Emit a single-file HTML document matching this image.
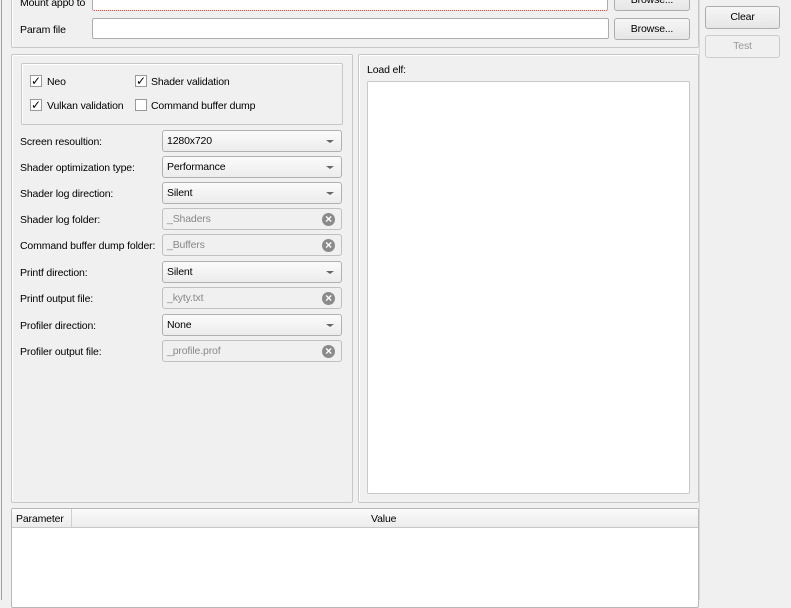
<!DOCTYPE html>
<html><head><style>
body{margin:0;width:791px;height:600px;background:#f0f0f0;font-family:"Liberation Sans",sans-serif;font-size:10.5px;letter-spacing:-0.15px;color:#000;position:relative;overflow:hidden}
.a{position:absolute}
.grp{position:absolute;border:1px solid #c8c8c8;border-radius:2px;box-shadow:inset 1px 1px 0 #fff}
.inp{position:absolute;background:#fff;border:1px solid #adadad;border-radius:2px;box-sizing:border-box}
.btn{position:absolute;box-sizing:border-box;border:1px solid #adadad;border-radius:3px;background:linear-gradient(#f6f6f6,#e6e6e6);text-align:center;line-height:21px}
.cb{position:absolute;width:12px;height:12px;border:1px solid #999;background:#fff;box-sizing:border-box;font-size:12px;line-height:10px;text-align:center}
.combo{position:absolute;left:162px;width:180px;height:22px;box-sizing:border-box;border:1px solid #b0b0b0;border-radius:3px;background:linear-gradient(#fbfbfb,#ececec);padding-left:4px;line-height:20px}
.combo:after{content:"";position:absolute;right:7px;top:9px;border:3px solid transparent;border-top:3px solid #666;border-bottom:0;border-left-width:4px;border-right-width:4px}
.le{position:absolute;left:162px;width:180px;height:22px;box-sizing:border-box;border:1px solid #c0c0c0;border-radius:3px;background:#f0f0f0;padding-left:4px;line-height:20px;color:#888}
.le:after{content:"×";position:absolute;right:6px;top:4px;width:13px;height:13px;border-radius:50%;background:#8a8a8a;color:#fff;font-size:12px;font-weight:bold;line-height:13px;text-align:center}
.lbl{position:absolute;left:20px}
</style></head><body>
<div class="a" style="left:1px;top:0;width:1px;height:600px;background:#a0a0a0"></div>
<div class="a" style="left:699px;top:0;width:1px;height:600px;background:#d8d8d8"></div>
<div class="grp" style="left:11px;top:-10px;width:686px;height:56px"></div>
<div class="a" style="left:20px;top:-3px">Mount app0 to</div>
<div class="inp" style="left:92px;top:-10px;width:516px;height:21px;border-bottom:1px dotted #c04040"></div>
<div class="btn" style="left:614px;top:-11px;width:76px;height:22px">Browse...</div>
<div class="a" style="left:20px;top:24px">Param file</div>
<div class="inp" style="left:92px;top:18px;width:517px;height:21px"></div>
<div class="btn" style="left:614px;top:18px;width:76px;height:22px">Browse...</div>
<div class="btn" style="left:705px;top:6px;width:75px;height:23px">Clear</div>
<div class="btn" style="left:705px;top:35px;width:75px;height:23px;color:#999;border-color:#ccc;background:#f0f0f0">Test</div>

<div class="grp" style="left:11px;top:54px;width:340px;height:447px"></div>
<div class="grp" style="left:21px;top:63px;width:320px;height:60px"></div>
<div class="cb" style="left:30px;top:75px">✓</div><div class="a" style="left:47px;top:76px">Neo</div>
<div class="cb" style="left:135px;top:75px">✓</div><div class="a" style="left:151px;top:76px">Shader validation</div>
<div class="cb" style="left:30px;top:99px">✓</div><div class="a" style="left:47px;top:100px">Vulkan validation</div>
<div class="cb" style="left:135px;top:99px"></div><div class="a" style="left:151px;top:100px">Command buffer dump</div>

<div class="lbl" style="top:136px">Screen resoultion:</div><div class="combo" style="top:130px">1280x720</div>
<div class="lbl" style="top:162px">Shader optimization type:</div><div class="combo" style="top:156px">Performance</div>
<div class="lbl" style="top:188px">Shader log direction:</div><div class="combo" style="top:182px">Silent</div>
<div class="lbl" style="top:214px">Shader log folder:</div><div class="le" style="top:208px">_Shaders</div>
<div class="lbl" style="top:240px">Command buffer dump folder:</div><div class="le" style="top:234px">_Buffers</div>
<div class="lbl" style="top:267px">Printf direction:</div><div class="combo" style="top:261px">Silent</div>
<div class="lbl" style="top:293px">Printf output file:</div><div class="le" style="top:287px">_kyty.txt</div>
<div class="lbl" style="top:320px">Profiler direction:</div><div class="combo" style="top:314px">None</div>
<div class="lbl" style="top:346px">Profiler output file:</div><div class="le" style="top:340px">_profile.prof</div>

<div class="grp" style="left:358px;top:54px;width:339px;height:447px"></div>
<div class="a" style="left:367px;top:64px">Load elf:</div>
<div class="inp" style="left:367px;top:81px;width:323px;height:413px;border-color:#c8c8c8"></div>

<div class="inp" style="left:11px;top:508px;width:688px;height:100px;border-color:#b8b8b8"></div>
<div class="a" style="left:12px;top:509px;width:686px;height:18px;background:linear-gradient(#fafafa,#ececec);border-bottom:1px solid #c8c8c8"></div>
<div class="a" style="left:71px;top:509px;width:1px;height:18px;background:#d0d0d0"></div>
<div class="a" style="left:16px;top:513px">Parameter</div>
<div class="a" style="left:371px;top:513px">Value</div>
</body></html>
